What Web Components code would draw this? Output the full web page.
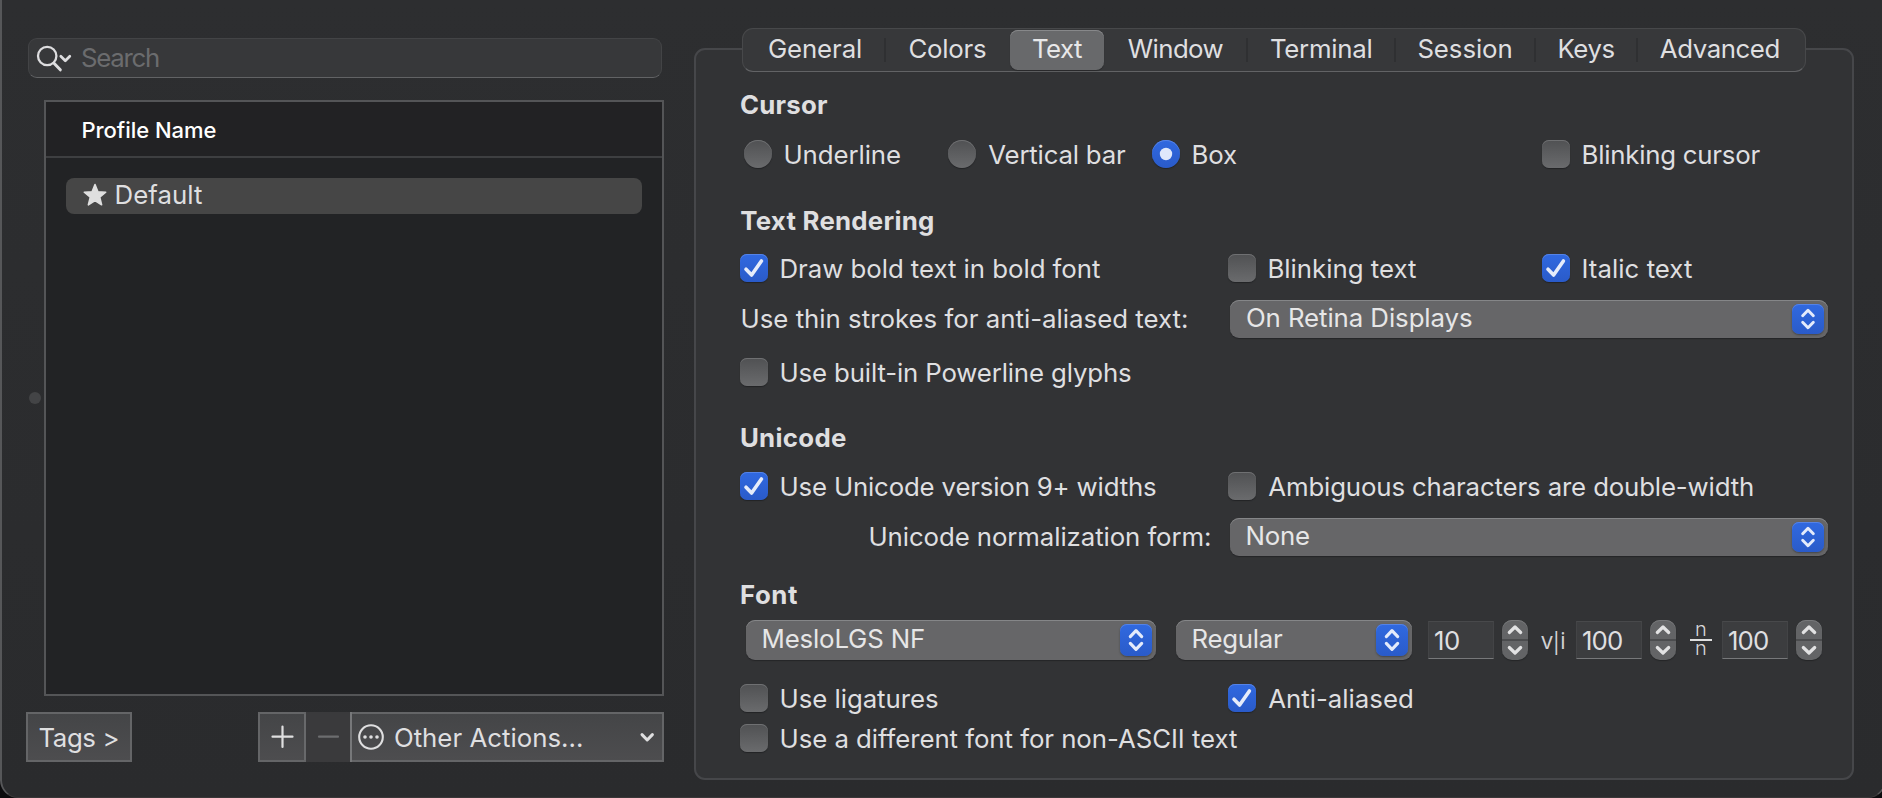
<!DOCTYPE html>
<html lang="en">
<head>
<meta charset="utf-8">
<title>Profiles</title>
<style>
html,body{margin:0;height:100%;background:#0c0c0e;overflow:hidden}
body{font-family:Inter,"Liberation Sans",sans-serif;font-size:25.8px;font-weight:430;color:#dfdfe0}
</style>
</head>
<body>
<profiles-window></profiles-window>
<script>
const define = (name, html, setup) => {
  const tpl = document.createElement('template');
  tpl.innerHTML = html;
  customElements.define(name, class extends HTMLElement {
    connectedCallback() {
      if (this.shadowRoot) return;
      this.attachShadow({mode: 'open'}).appendChild(tpl.content.cloneNode(true));
      if (setup) setup(this, this.shadowRoot);
    }
  });
};

/* A line of text whose glyphs fill the given width; part of the first glyph's side bearing is kept. */
const ctx = document.createElement('canvas').getContext('2d');
define('fit-text', `<style>
:host{display:block;white-space:nowrap;line-height:30px;height:30px;flex:none;font-kerning:normal}
</style><slot></slot>`, host => {
  const cs = getComputedStyle(host), text = host.textContent, w = +host.getAttribute('w');
  ctx.font = cs.fontWeight + ' ' + cs.fontSize + ' ' + cs.fontFamily;
  const m = ctx.measureText(text);
  const ink = m.actualBoundingBoxLeft + m.actualBoundingBoxRight;
  const shift = (-m.actualBoundingBoxLeft - 1.2) * 0.6;
  const ls = text.length > 1 ? (w - shift - ink) / (text.length - 1) : 0;
  host.style.letterSpacing = ls.toFixed(3) + 'px';
  host.style.textIndent = (m.actualBoundingBoxLeft + shift).toFixed(2) + 'px';
  host.style.width = w + 'px';
});

define('check-box', `<style>
:host{display:flex;align-items:center;height:40px;gap:13px}
i{width:28px;height:28px;flex:none;border-radius:7px;background:linear-gradient(#505153,#6a6b6d);box-shadow:inset 0 1px 0 #6f7072,0 1px 1px #222325}
:host([kind=radio]) i{border-radius:50%}
:host([on]) i{background:linear-gradient(#3069e0,#2a5bc9);box-shadow:inset 0 1px 0 #5583e6,0 1px 1px #222325}
svg{display:none;width:28px;height:28px}
:host([on]:not([kind])) .tick,:host([on][kind]) .dot{display:block}
slot{display:block;padding-top:1px}
</style><i><svg class="tick" viewBox="0 0 28 28"><path d="M6 15.2 11.6 21 21.4 7" fill="none" stroke="#e6ecfa" stroke-width="3.6" stroke-linecap="round" stroke-linejoin="round"/></svg><svg class="dot" viewBox="0 0 28 28"><circle cx="14" cy="14" r="6.2" fill="#dfe8fb"/></svg></i><slot></slot>`);

define('pop-up', `<style>
:host{display:flex;align-items:center;justify-content:space-between;height:38px;box-sizing:border-box;padding:0 4px 0 17px;border-radius:9px;background:#666668;box-shadow:inset 0 1px 0 #858688,0 1px 1px #242527;color:#e6e6e7}
:host([tall]){height:40px}
slot{display:block;padding-bottom:3px}
i{width:32px;height:30px;border-radius:7px;background:linear-gradient(#3069e0,#2a5bc9);box-shadow:inset 0 1px 0 #5583e6,0 1px 2px #434448}
:host([tall]) i{height:32px}
svg{display:block;width:32px;height:100%}
</style><slot></slot><i><svg viewBox="0 0 32 32"><path d="M10.3 12.6 16 6.6 21.7 12.6M10.3 19.4 16 25.4 21.7 19.4" fill="none" stroke="#e4ebfb" stroke-width="3.1" stroke-linecap="round" stroke-linejoin="round"/></svg></i>`);

define('number-field', `<style>
:host{display:flex;align-items:center;gap:8px;height:40px}
div{width:66px;height:38px;box-sizing:border-box;padding:4px 0 0 6px;background:#3c3d3f;border:1px solid #48494b;border-left-color:#434446;border-right-color:#434446;border-bottom:1px solid #77787a}
i{width:26px;height:40px;border-radius:10px;background:#636466;box-shadow:inset 0 1px 0 #77787a,0 1px 1px #242527}
svg{display:block}
</style><div><slot></slot></div><i><svg width="26" height="40" viewBox="0 0 26 40"><path d="M0 20H26" stroke="#4b4c4e" stroke-width="2"/><path d="M7.3 12.5 13 7 18.7 12.5M7.3 27.5 13 33 18.7 27.5" fill="none" stroke="#e2e2e3" stroke-width="3.2" stroke-linecap="round" stroke-linejoin="round"/></svg></i>`);

define('search-field', `<style>
:host{display:flex;align-items:center;height:40px;box-sizing:border-box;border-radius:9px;background:#37383a;border:1px solid #434446;border-bottom-color:#626365;padding-left:7px;color:#6b6c6e}
svg{margin-right:7px;flex:none}
fit-text{padding-bottom:1px}
</style><svg width="39" height="38" viewBox="0 0 39 38"><g fill="none" stroke="#dddddf" stroke-linecap="round"><circle cx="11.2" cy="17" r="9.2" stroke-width="2.3"/><path d="M18 24.3 24.3 30.8" stroke-width="3"/><path d="M24.8 17.3 29.3 21.8 33.8 17.3" stroke-width="2.7" stroke-linejoin="round"/></g></svg><slot></slot>`);

define('tab-bar', `<style>
:host{display:flex;box-sizing:border-box;width:1064px;height:44px;border-radius:11px;background:#37383a;border:1px solid #47484a;border-bottom-color:#626365;margin-left:48px;padding:1px 0}
</style><slot></slot>`);
define('tab-item', `<style>
:host{display:flex;align-items:center;height:40px;box-sizing:border-box;flex:none;border-radius:8px;padding-bottom:2px}
:host([on]){background:#68696b;box-shadow:inset 0 1px 0 #87888a,0 1px 1px #28292b;color:#e8e8e9}
:host([sep])::after{content:"";margin-left:auto;width:2px;height:24px;background:#2f3032;margin-top:2px}
</style><slot></slot>`, h => {
  h.style.width = h.getAttribute('width') + 'px';
  h.style.paddingLeft = h.getAttribute('start') + 'px';
});

define('form-row', `<style>
:host{display:grid;align-items:center;height:40px;padding-left:46px}
</style><slot></slot>`, h => {
  h.style.marginTop = (h.getAttribute('gap') || 0) + 'px';
  h.style.gridTemplateColumns = h.getAttribute('cols') || 'auto';
});

define('profile-list', `<style>
:host{display:block;box-sizing:border-box;width:620px;height:596px;margin:22px 0 0 44px;border:2px solid #545557;background:#222325}
header{height:56px;display:flex;align-items:center;box-sizing:border-box;padding:2px 0 0 36.5px;border-bottom:2px solid #3e3f41;background:#222224;font-size:22px;font-weight:500;color:#fff}
.row{margin:20px 0 0 20px;width:576px;height:36px;border-radius:8px;background:#464646;display:flex;align-items:center}
svg{margin:-3px 9px 0 17px}
.row fit-text{padding-bottom:2px}
</style><header><fit-text w="133">Profile Name</fit-text></header>
<div class="row"><svg width="24" height="24" viewBox="0 0 24 24"><path d="M12 1.5 14.9 8.7 22.7 9.2 16.7 14.2 18.6 21.8 12 17.6 5.4 21.8 7.3 14.2 1.3 9.2 9.1 8.7Z" fill="#dfdfdf" stroke="#dfdfdf" stroke-width="1.6" stroke-linejoin="round"/></svg><fit-text w="86">Default</fit-text></div>`);

define('action-bar', `<style>
:host{display:flex;margin:16px 0 0 26px;width:638px;height:50px;justify-content:space-between}
.b{box-sizing:border-box;height:50px;border:2px solid #646567;background:linear-gradient(#444547,#4d4d4f);display:flex;align-items:center}
.tags{width:106px;padding-left:11.5px}
.group{width:406px;padding:0}
.plus{width:44px;height:46px;border-right:2px solid #68696b}
.minus{width:44px;height:50px;margin:-2px 0;background:#3a3a3c;border-right:2px solid #77787a}
.more{display:flex;align-items:center;flex:1;height:46px}
svg{display:block}
fit-text{padding-top:1px}
</style><div class="b tags"><fit-text w="78">Tags &gt;</fit-text></div>
<div class="b group"><div class="plus"><svg width="44" height="46" viewBox="0 0 44 46"><path d="M12.5 22.7H32.5M22.5 12.5V33" stroke="#dfdfe0" stroke-width="2.2" stroke-linecap="round"/></svg></div>
<div class="minus"><svg width="44" height="50" viewBox="0 0 44 50"><path d="M13 24.7H32" stroke="#6c6d6f" stroke-width="2.2" stroke-linecap="round"/></svg></div>
<div class="more"><svg width="43" height="46" viewBox="0 0 43 46"><circle cx="19" cy="23" r="11.8" fill="none" stroke="#dfdfe0" stroke-width="2.1"/><g fill="#dfdfe0"><circle cx="13" cy="23" r="1.8"/><circle cx="19" cy="23" r="1.8"/><circle cx="25" cy="23" r="1.8"/></g></svg><fit-text w="187">Other Actions...</fit-text><svg width="22" height="46" viewBox="0 0 22 46" style="margin:0 4px 0 auto"><path d="M6 20.6 11.2 26 16.4 20.6" fill="none" stroke="#dfdfe0" stroke-width="3" stroke-linecap="round" stroke-linejoin="round"/></svg></div></div>`);

define('text-settings', `<style>
:host{display:block;box-sizing:border-box;position:relative;width:1160px;height:752px}
.frame{box-sizing:border-box;height:732px;margin-top:-24px;background:#323335;border:2px solid #46474a;border-radius:11px}
.body{margin-top:-695px;position:relative}
tab-bar{position:relative;z-index:1}
b{font-weight:700;display:block;margin-left:1px}
.vi{font-family:"Open Sans",sans-serif;font-weight:400;font-size:23px;color:#d2d2d4}
.nn{font-size:20px;font-weight:350;width:22px;height:34px;text-align:center;color:#d8d8da}
.nn span{display:block;height:16px;line-height:12px}
.nn span+span{border-top:2px solid #e0e0e0;line-height:15px}
</style>
<tab-bar>
<tab-item sep start="26" width="143"><fit-text w="92">General</fit-text></tab-item>
<tab-item start="23.5" width="124"><fit-text w="76.5">Colors</fit-text></tab-item>
<tab-item on start="23" width="94"><fit-text w="49">Text</fit-text></tab-item>
<tab-item sep start="24.5" width="144"><fit-text w="95">Window</fit-text></tab-item>
<tab-item sep start="23" width="148"><fit-text w="100.5">Terminal</fit-text></tab-item>
<tab-item sep start="22.5" width="140"><fit-text w="93">Session</fit-text></tab-item>
<tab-item sep start="23" width="102"><fit-text w="55.5">Keys</fit-text></tab-item>
<tab-item start="22.5" width="160"><fit-text w="118">Advanced</fit-text></tab-item>
</tab-bar>
<div class="frame"></div>
<div class="body">
<form-row><b><fit-text w="87">Cursor</fit-text></b></form-row>
<form-row gap="9" cols="4px 204px 204px 390px auto"><span></span><check-box kind="radio"><fit-text w="115">Underline</fit-text></check-box><check-box kind="radio"><fit-text w="137">Vertical bar</fit-text></check-box><check-box kind="radio" on><fit-text w="44">Box</fit-text></check-box><check-box><fit-text w="177.5">Blinking cursor</fit-text></check-box></form-row>
<form-row gap="27"><b><fit-text w="192">Text Rendering</fit-text></b></form-row>
<form-row gap="7" cols="488px 314px auto"><check-box on><fit-text w="319">Draw bold text in bold font</fit-text></check-box><check-box><fit-text w="147">Blinking text</fit-text></check-box><check-box on><fit-text w="109">Italic text</fit-text></check-box></form-row>
<form-row gap="11" cols="2px 488px 598px"><span></span><fit-text w="445">Use thin strokes for anti-aliased text:</fit-text><pop-up><fit-text w="225">On Retina Displays</fit-text></pop-up></form-row>
<form-row gap="13"><check-box><fit-text w="350">Use built-in Powerline glyphs</fit-text></check-box></form-row>
<form-row gap="26"><b><fit-text w="105">Unicode</fit-text></b></form-row>
<form-row gap="8" cols="488px auto"><check-box on><fit-text w="375">Use Unicode version 9+ widths</fit-text></check-box><check-box><fit-text w="484">Ambiguous characters are double-width</fit-text></check-box></form-row>
<form-row gap="11" cols="130px 360px 598px"><span></span><fit-text w="340">Unicode normalization form:</fit-text><pop-up><fit-text w="62">None</fit-text></pop-up></form-row>
<form-row gap="18"><b><fit-text w="56">Font</fit-text></b></form-row>
<form-row gap="5" cols="6px 430px 252px 114px 34px 114px 32px 100px"><span></span><pop-up tall style="width:410px"><fit-text w="161">MesloLGS NF</fit-text></pop-up><pop-up tall style="width:236px"><fit-text w="90">Regular</fit-text></pop-up><number-field><fit-text w="24">10</fit-text></number-field><fit-text class="vi" w="23">v|i</fit-text><number-field><fit-text w="39">100</fit-text></number-field><div class="nn"><span>n</span><span>n</span></div><number-field><fit-text w="39">100</fit-text></number-field></form-row>
<form-row gap="18" cols="488px auto"><check-box><fit-text w="157">Use ligatures</fit-text></check-box><check-box on><fit-text w="143">Anti-aliased</fit-text></check-box></form-row>
<form-row><check-box><fit-text w="456">Use a different font for non-ASCII text</fit-text></check-box></form-row>
</div>`);

define('profiles-window', `<style>
:host{display:flex;box-sizing:border-box;position:relative;width:1886px;height:798px;background:linear-gradient(#2d2e30,#2a2b2d);border-radius:0 0 18px 18px;overflow:hidden}
:host::before{content:"";position:absolute;inset:-2px 0 0 0;border:2px solid #565759;border-bottom:1px solid #3a3738;border-radius:0 0 18px 18px;pointer-events:none}
.left{width:694px;flex:none}
search-field{margin:38px 0 0 28px;width:634px}
.right{padding-top:28px}
.grip{position:absolute;left:29px;top:392px;width:12px;height:12px;border-radius:50%;background:#434446}
</style><div class="left"><search-field><fit-text w="77">Search</fit-text></search-field><profile-list></profile-list><action-bar></action-bar></div><div class="right"><text-settings></text-settings></div><div class="grip"></div>`);
</script>
</body>
</html>
